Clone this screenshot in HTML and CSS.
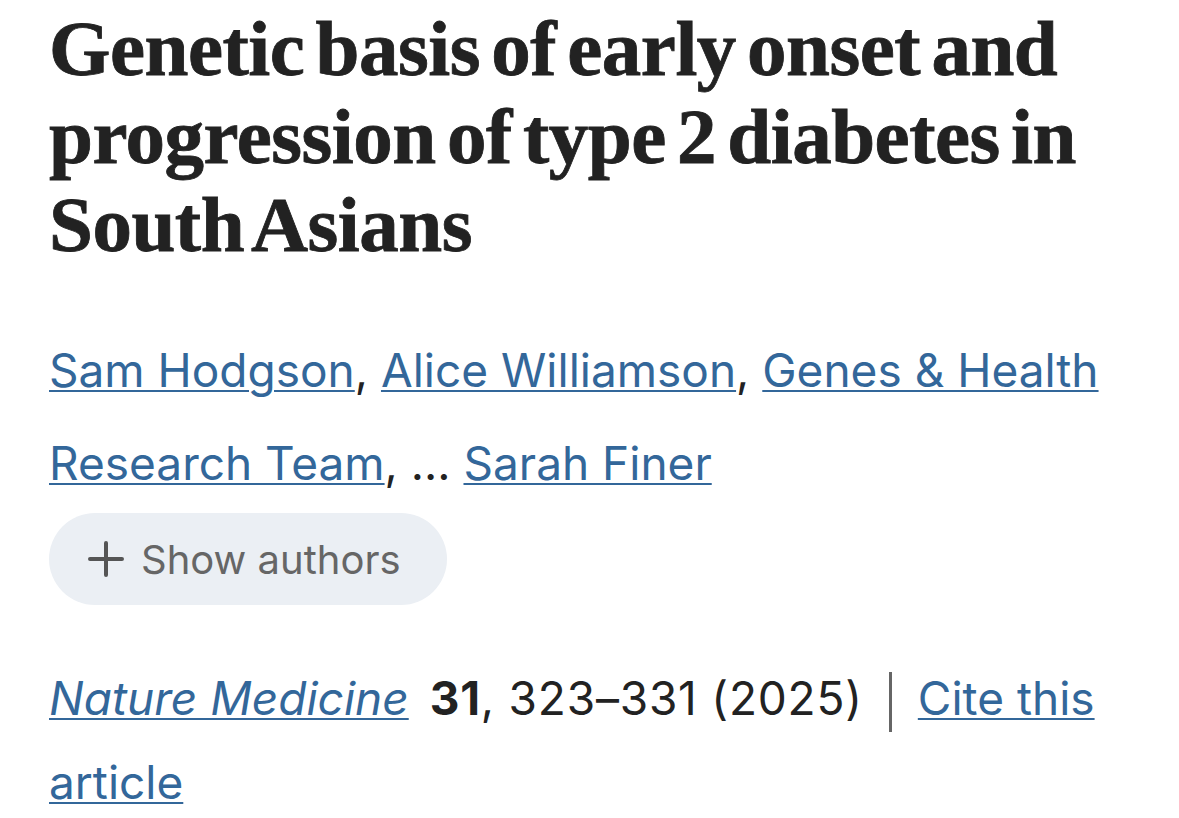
FILE: index.html
```html
<!DOCTYPE html>
<html lang="en">
<head>
<meta charset="utf-8">
<link rel="stylesheet" href="styles.css">
</head>
<body>
<main class="article-header">
  <h1 class="title">Genetic basis of early onset and progression of type 2 diabetes in South Asians</h1>
  <p class="authors"><a href="#">Sam Hodgson</a>, <a href="#">Alice Williamson</a>, <a href="#">Genes &amp; Health Research Team</a>, … <a href="#">Sarah Finer</a></p>
  <button class="show-authors" type="button">
    <svg class="plus" viewBox="0 0 36 36" width="36" height="36" aria-hidden="true"><path d="M18 2v32M2 18h32" stroke="#555" stroke-width="4" stroke-linecap="round" fill="none"/></svg>
    <span>Show authors</span>
  </button>
  <p class="citation"><a class="journal" href="#">Nature Medicine</a> <span class="pages"><b>31</b>, 323–331 (2025)</span><span class="sep"></span><a href="#">Cite this article</a></p>
</main>
</body>
</html>
```
FILE: styles.css
```css
html, body { margin: 0; padding: 0; background: #fff; }
body { font-family: Inter, Roboto, "Noto Sans", sans-serif; color: #222; }
.article-header { padding: 5px 60px 0 49px; }
.title {
  font-family: "Liberation Serif", "Times New Roman", serif;
  font-weight: 700;
  font-size: 79px;
  line-height: 88px;
  letter-spacing: -0.5px;
  word-spacing: -8px;
  margin: 0;
  color: #222;
  -webkit-text-stroke: 0.8px #222;
}
.authors {
  margin: 55px 0 0 0;
  font-size: 46px;
  line-height: 93px;
  color: #222;
}
a { color: #33679a; text-decoration: underline; text-decoration-thickness: 2px; text-underline-offset: 3px; }
.show-authors {
  display: inline-flex; align-items: center; gap: 17px;
  margin-top: 3px;
  height: 92px; padding: 0 46px 0 39px;
  border: none; border-radius: 46px;
  background: #ebeff4;
  font-family: inherit; font-size: 40px; color: #666;
}
.plus { width: 36px; height: 36px; }
.citation { margin: 51px 0 0 0; font-size: 46px; line-height: 84px; }
.journal { font-style: italic; margin-right: 8px; }
.pages { letter-spacing: 0.8px; }
.pages b { font-weight: 700; }
.sep { display: inline-block; width: 3px; height: 60px; background: #666; vertical-align: middle; margin: 0 26px 0 26px; }
```
